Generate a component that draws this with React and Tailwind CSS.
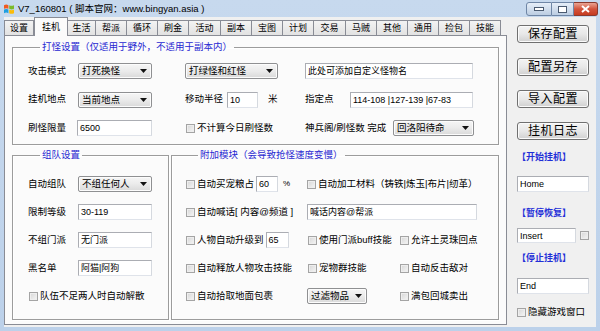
import React from 'react';

const TABS = [
  { label: '设置', w: 'w-[30px]' },
  { label: '挂机', w: 'w-[34px]', active: true },
  { label: '生活', w: 'w-[28px]' },
  { label: '帮派', w: 'w-[31px]' },
  { label: '循环', w: 'w-[31px]' },
  { label: '刷金', w: 'w-[31px]' },
  { label: '活动', w: 'w-[32px]' },
  { label: '副本', w: 'w-[31px]' },
  { label: '宝图', w: 'w-[31px]' },
  { label: '计划', w: 'w-[31px]' },
  { label: '交易', w: 'w-[32px]' },
  { label: '马贼', w: 'w-[31px]' },
  { label: '其他', w: 'w-[31px]' },
  { label: '通用', w: 'w-[31px]' },
  { label: '捡包', w: 'w-[31px]' },
  { label: '技能', w: 'w-[31px]' },
];

const Arrow = () => (
  <svg width="7" height="4" viewBox="0 0 7 4" className="shrink-0">
    <path d="M0 0h7L3.5 4z" fill="#111" />
  </svg>
);

const Select = ({ w, children }) => (
  <div className={`${w} h-[16px] shrink-0 flex items-center justify-between pl-[3px] pr-[4px] border border-[#8f9092] rounded-[2px] bg-gradient-to-b from-[#f6f6f6] via-[#ebebeb] to-[#d9d9d9] shadow-[inset_0_0_0_1px_#fcfcfc]`}>
    <span className="leading-[12px]">{children}</span>
    <Arrow />
  </div>
);

const Input = ({ w, children, h = 'h-[16px]' }) => (
  <div className={`${w} ${h} shrink-0 flex items-center px-[2px] bg-white border border-[#abadb3] border-b-[#dfe3ea] border-r-[#d5d9df] leading-[12px] text-[9px] overflow-hidden whitespace-nowrap`}>
    {children}
  </div>
);

const Box = () => (
  <span className="w-[9px] h-[9px] shrink-0 border border-[#a4a4a4] bg-gradient-to-br from-[#d6d6d6] to-[#f6f6f6] shadow-[inset_0_0_0_1px_#eeeeee]" />
);

const Check = ({ children }) => (
  <div className="flex items-center gap-[2px] whitespace-nowrap">
    <Box />
    <span className="leading-[12px]">{children}</span>
  </div>
);

const Group = ({ title, className, children }) => (
  <fieldset className={`border border-[#9c9c9c] shadow-[1px_1px_0_#ffffff,inset_1px_1px_0_#ffffff] ${className}`}>
    <legend className="ml-[12px] px-[2px] leading-[12px] text-[#2828d2]">{title}</legend>
    {children}
  </fieldset>
);

const Btn = ({ children, className = '' }) => (
  <div className={`h-[18px] w-[72px] flex items-center justify-center border border-[#707070] rounded-[3px] bg-gradient-to-b from-[#f3f3f3] via-[#e8e8e8] to-[#d0d0d0] shadow-[inset_0_0_0_1px_#fbfbfb] text-[12px] leading-[14px] tracking-[0.5px] ${className}`}>
    {children}
  </div>
);

const Logo = () => (
  <svg width="12" height="12" viewBox="0 0 12 12">
    <path d="M1 2.2c1.6-.8 3-.8 4.4 0v3.6C4 5 2.6 5 1 5.8z" fill="#f05a22" />
    <path d="M6.2 2.2c1.6.8 3 .8 4.8 0v3.6c-1.8.8-3.2.8-4.8 0z" fill="#7cbb2a" />
    <path d="M1 6.6c1.6-.8 3-.8 4.4 0v3.6C4 9.4 2.6 9.4 1 10.2z" fill="#1e9ee0" />
    <path d="M6.2 6.6c1.6.8 3 .8 4.8 0v3.6c-1.8.8-3.2.8-4.8 0z" fill="#fbbc09" />
  </svg>
);

export default function App() {
  return (
    <div className="w-[600px] h-[331px] overflow-hidden flex flex-col bg-gradient-to-b from-[#c7d9ee] to-[#bcd1ea] text-black font-['Liberation_Sans','Noto_Sans_CJK_SC',sans-serif] text-[9.5px]">
      {/* title bar */}
      <div className="h-[17px] flex items-start shrink-0">
        <div className="mt-[3px] ml-[3px]"><Logo /></div>
        <div className="ml-[3px] mt-[3px] text-[9.5px] leading-[12px]">V7_160801 ( 脚本官网：www.bingyan.asia )</div>
        <div className="ml-auto mr-[2px] flex">
          <div className="w-[26px] h-[14px] mt-[2px] flex items-center justify-center border border-[#6f86a6] rounded-l-[3px] bg-gradient-to-b from-[#e6eef8] to-[#bccde2]">
            <span className="w-[8px] h-[2px] bg-white border border-[#4a5a70] box-content" />
          </div>
          <div className="w-[22px] h-[14px] mt-[2px] flex items-center justify-center border border-l-0 border-[#6f86a6] bg-gradient-to-b from-[#e6eef8] to-[#bccde2]">
            <span className="w-[7px] h-[5px] border border-[#4a5a70] bg-white box-content" />
          </div>
          <div className="w-[24px] h-[14px] mt-[2px] flex items-center justify-center border border-l-0 border-[#8a3a2e] rounded-r-[3px] bg-gradient-to-b from-[#e9a493] via-[#d2543c] to-[#c63a1f]">
            <svg width="9" height="8" viewBox="0 0 9 8">
              <path d="M1 1l7 6M8 1L1 7" stroke="#fff" strokeWidth="2" />
            </svg>
          </div>
        </div>
      </div>

      {/* client area */}
      <div className="flex-1 flex mx-[4px] mb-[4px] bg-[#f0f0f0]">
        {/* tab control */}
        <div className="w-[503px] flex flex-col pb-[2px]">
          <div className="h-[18px] flex items-end shrink-0">
            {TABS.map((t) => (
              <div
                key={t.label}
                className={
                  t.active
                    ? `${t.w} h-[19px] -mb-[1px] relative z-10 flex items-center justify-center border border-b-0 border-[#898c95] bg-[#fbfbfb] text-[9px] leading-[12px]`
                    : `${t.w} h-[15px] flex items-center justify-center border border-b-0 border-l-0 first:border-l border-[#898c95] bg-gradient-to-b from-[#f3f3f3] to-[#e2e2e2] text-[9px] leading-[12px]`
                }
              >
                {t.label}
              </div>
            ))}
          </div>
          <div className="flex-1 border border-[#898c95] bg-[#fbfbfb] pt-[5px] px-[7px]">
            {/* 打怪设置 */}
            <Group title="打怪设置（仅适用于野外，不适用于副本内）" className="pt-[10px] pb-[8px] pl-[15px]">
              <div className="flex flex-col gap-[12.5px]">
                <div className="flex items-center h-[16px]">
                  <div className="w-[50px]">攻击模式</div>
                  <Select w="w-[74px]">打死换怪</Select>
                  <div className="w-[33px]" />
                  <div className="w-[120px]"><Select w="w-[93px]">打绿怪和红怪</Select></div>
                  <Input w="w-[168px]">此处可添加自定义怪物名</Input>
                </div>
                <div className="flex items-center h-[16px]">
                  <div className="w-[50px]">挂机地点</div>
                  <Select w="w-[74px]">当前地点</Select>
                  <div className="w-[33px]" />
                  <div className="w-[120px] flex items-center">
                    <span className="w-[42px]">移动半径</span>
                    <Input w="w-[31px]">10</Input>
                    <span className="ml-[10px]">米</span>
                  </div>
                  <span className="w-[45px]">指定点</span>
                  <Input w="w-[123px]">114-108 |127-139 |67-83</Input>
                </div>
                <div className="flex items-center h-[16px]">
                  <div className="w-[49px]">刷怪限量</div>
                  <Input w="w-[75px]">6500</Input>
                  <div className="w-[34px]" />
                  <div className="w-[119px]"><Check>不计算今日刷怪数</Check></div>
                  <span className="w-[88px] whitespace-nowrap">神兵阁/刷怪数 完成</span>
                  <Select w="w-[81px]">回洛阳待命</Select>
                </div>
              </div>
            </Group>

            <div className="flex gap-[2px] mt-[4px]">
              {/* 组队设置 */}
              <Group title="组队设置" className="w-[157px] pt-[15px] pb-[15px] pl-[15px]">
                <div className="flex flex-col gap-[12px]">
                  <div className="flex items-center h-[16px]">
                    <div className="w-[50px]">自动组队</div>
                    <Select w="w-[74px]">不组任何人</Select>
                  </div>
                  <div className="flex items-center h-[16px]">
                    <div className="w-[50px]">限制等级</div>
                    <Input w="w-[74px]">30-119</Input>
                  </div>
                  <div className="flex items-center h-[16px]">
                    <div className="w-[50px]">不组门派</div>
                    <Input w="w-[74px]">无门派</Input>
                  </div>
                  <div className="flex items-center h-[16px]">
                    <div className="w-[50px]">黑名单</div>
                    <Input w="w-[74px]">阿猫|阿狗</Input>
                  </div>
                  <div className="flex items-center h-[16px] pl-[1px]">
                    <Check>队伍不足两人时自动解散</Check>
                  </div>
                </div>
              </Group>

              {/* 附加模块 */}
              <Group title="附加模块（会导致抢怪速度变慢）" className="flex-1 pt-[15px] pb-[15px] pl-[14px]">
                <div className="flex flex-col gap-[12px]">
                  <div className="flex items-center h-[16px]">
                    <div className="w-[121px] flex items-center">
                      <Check>自动买宠粮占</Check>
                      <Input w="w-[22px] ml-[2px]">60</Input>
                      <span className="ml-[5px] text-[8px]">%</span>
                    </div>
                    <Check>自动加工材料（铸铁|炼玉|布片|纫革）</Check>
                  </div>
                  <div className="flex items-center h-[16px]">
                    <div className="w-[121px]"><Check>自动喊话[ 内容@频道 ]</Check></div>
                    <Input w="w-[170px]">喊话内容@帮派</Input>
                  </div>
                  <div className="flex items-center h-[16px]">
                    <div className="w-[122px] flex items-center">
                      <Check>人物自动升级到</Check>
                      <Input w="w-[23px] ml-[2px]">65</Input>
                    </div>
                    <div className="w-[92px]"><Check>使用门派buff技能</Check></div>
                    <Check>允许土灵珠回点</Check>
                  </div>
                  <div className="flex items-center h-[16px]">
                    <div className="w-[122px]"><Check>自动释放人物攻击技能</Check></div>
                    <div className="w-[92px]"><Check>宠物群技能</Check></div>
                    <Check>自动反击敌对</Check>
                  </div>
                  <div className="flex items-center h-[16px]">
                    <div className="w-[121px]"><Check>自动拾取地面包裹</Check></div>
                    <div className="w-[93px]"><Select w="w-[60px]">过滤物品</Select></div>
                    <Check>满包回城卖出</Check>
                  </div>
                </div>
              </Group>
            </div>
          </div>
        </div>

        {/* right column */}
        <div className="ml-[10px] w-[72px] flex flex-col">
          <Btn className="mt-[8px]">保存配置</Btn>
          <Btn className="mt-[15px]">配置另存</Btn>
          <Btn className="mt-[14px]">导入配置</Btn>
          <Btn className="mt-[14px]">挂机日志</Btn>
          <div className="mt-[11px] h-[12px] leading-[12px] font-bold text-[#1f2fd8] text-[9px]">【开始挂机】</div>
          <Input w="w-[72px] mt-[13px]">Home</Input>
          <div className="mt-[15px] h-[12px] leading-[12px] font-bold text-[#1f2fd8] text-[9px]">【暂停恢复】</div>
          <div className="mt-[9px] flex items-center justify-between">
            <Input w="w-[59px]" h="h-[15px]">Insert</Input>
            <Box />
          </div>
          <div className="mt-[9px] h-[12px] leading-[12px] font-bold text-[#1f2fd8] text-[9px]">【停止挂机】</div>
          <Input w="w-[72px] mt-[14px]">End</Input>
          <div className="mt-[12px] h-[12px] flex items-center">
            <Check>隐藏游戏窗口</Check>
          </div>
        </div>
      </div>
    </div>
  );
}
